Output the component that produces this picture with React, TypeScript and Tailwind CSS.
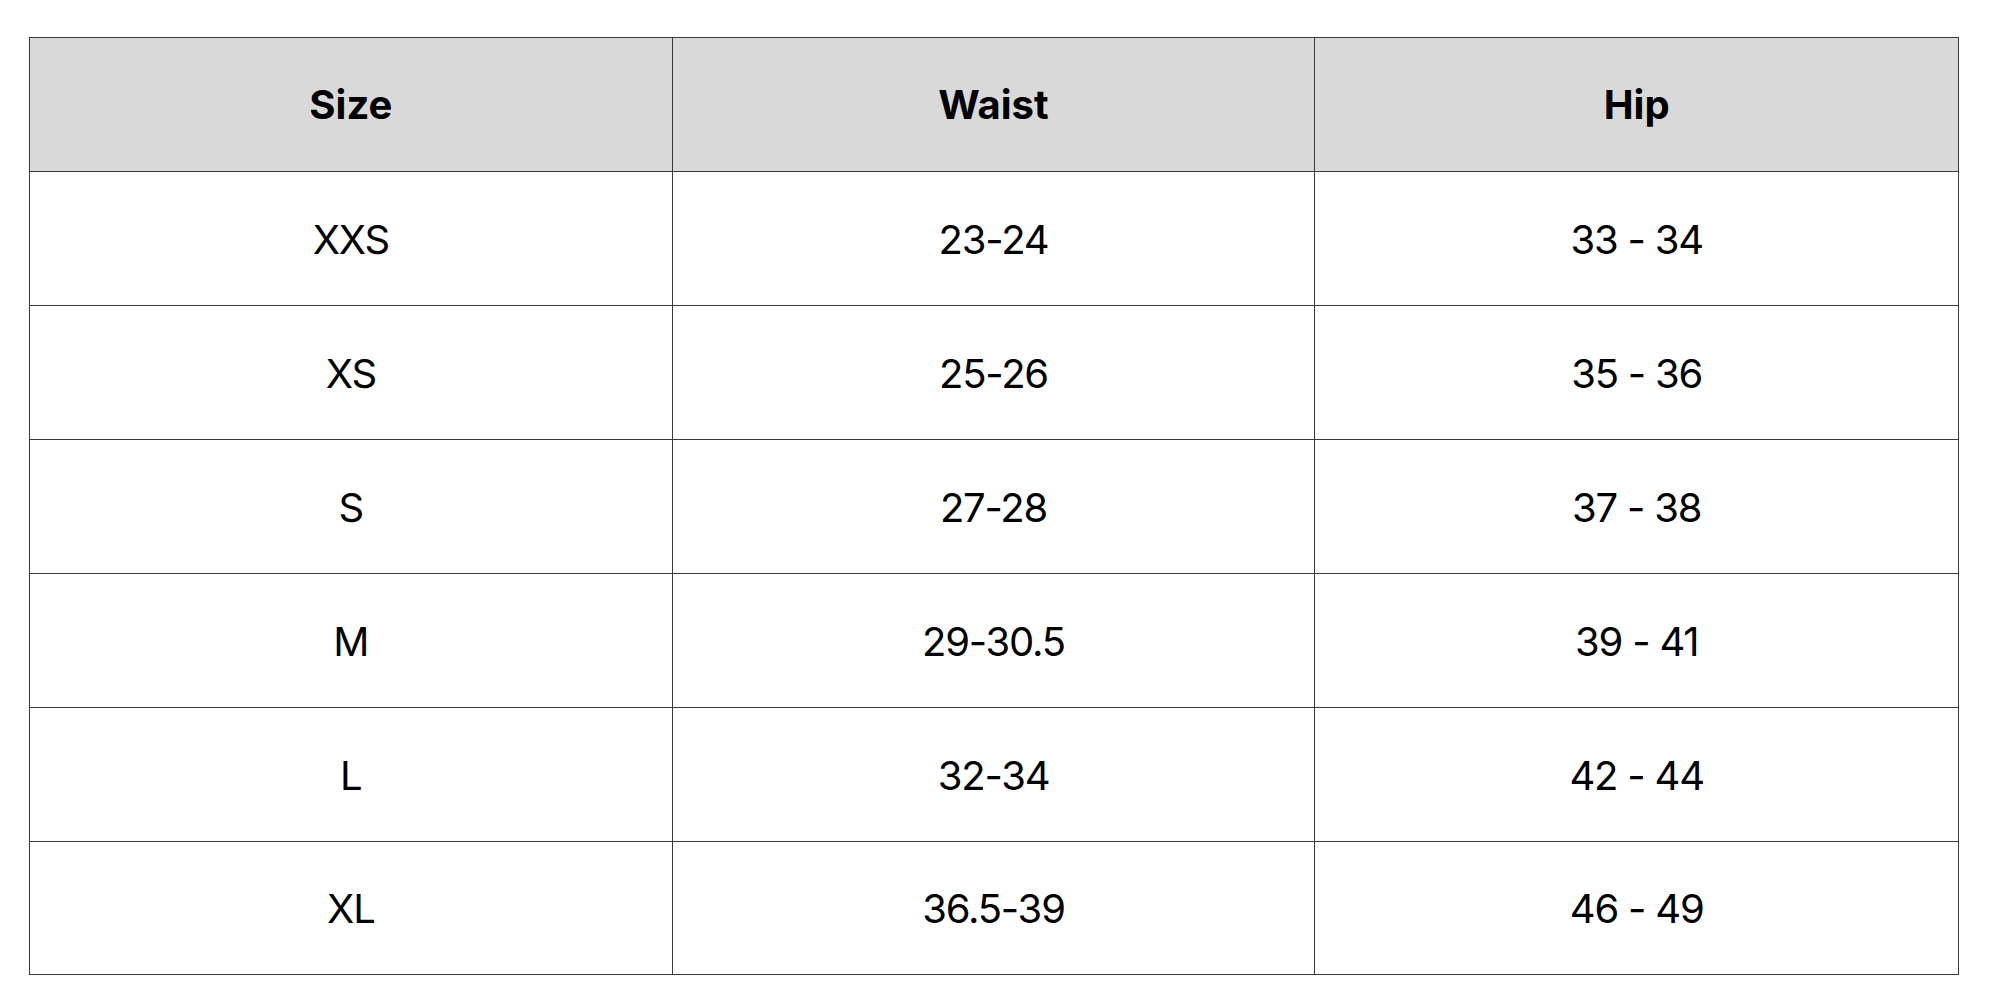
import React from 'react'

const rows = [
    ['XXS', '23-24', '33 - 34'],
    ['XS', '25-26', '35 - 36'],
    ['S', '27-28', '37 - 38'],
    ['M', '29-30.5', '39 - 41'],
    ['L', '32-34', '42 - 44'],
    ['XL', '36.5-39', '46 - 49'],
]

export default function App(){
    return (
        <div className="w-[2000px] h-[1000px] bg-white pl-[29px] pt-[37px] font-['Inter',sans-serif] text-black">
            <div className="w-[1930px] border border-[#3a3a3a]">
                <div className="grid grid-cols-3 h-[134px] bg-[#d9d9d9] border-b border-[#3a3a3a]">
                    <div className="flex items-center justify-center border-r border-[#3a3a3a] text-[40px] font-bold">Size</div>
                    <div className="flex items-center justify-center border-r border-[#3a3a3a] text-[40px] font-bold">Waist</div>
                    <div className="flex items-center justify-center text-[40px] font-bold">Hip</div>
                </div>
                {rows.map((r, i) => (
                    <div key={r[0]} className={i < rows.length - 1 ? "grid grid-cols-3 h-[134px] border-b border-[#3a3a3a]" : "grid grid-cols-3 h-[132px]"}>
                        <div className="flex items-center justify-center border-r border-[#3a3a3a] pt-[2px] text-[40px] tracking-[-1.2px]">{r[0]}</div>
                        <div className="flex items-center justify-center border-r border-[#3a3a3a] pt-[2px] text-[40px] tracking-[-1.2px]">{r[1]}</div>
                        <div className="flex items-center justify-center pt-[2px] text-[40px] tracking-[-1.2px]">{r[2]}</div>
                    </div>
                ))}
            </div>
        </div>
    )
}
